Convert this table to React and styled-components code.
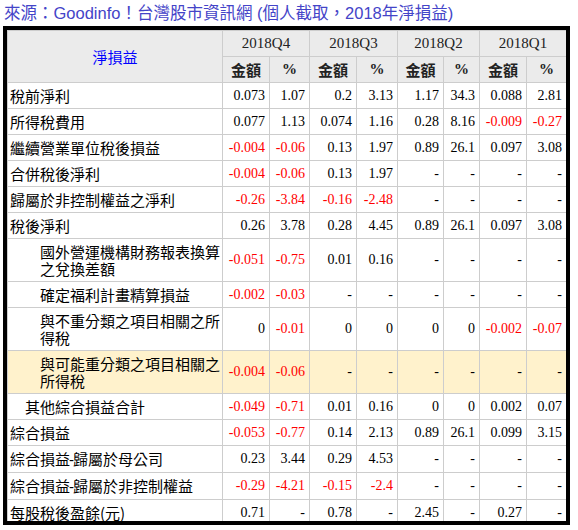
import styled, { createGlobalStyle } from "styled-components";

const GlobalStyle = createGlobalStyle`
	body {
		margin: 0;
		background: #fff;
	}
`;

const Title = styled.div`
	height: 26px;
	padding-left: 4px;
	line-height: 26px;
	font-family: "Liberation Sans", "Noto Sans CJK TC", sans-serif;
	font-size: 16.5px;
	color: #4444c8;
	white-space: nowrap;
`;

const Frame = styled.div`
	margin-left: 3px;
	width: 559px;
	height: 491px;
	border: 4px solid #000;
	overflow: hidden;
`;

const Grid = styled.div`
	display: grid;
	grid-template-columns: 214px 46px 39px 46px 40px 45px 35px 46px 39px;
	gap: 1px;
	padding: 1px 0 0 1px;
	background: #cdcdcd;
`;

const HeadCell = styled.div`
	display: flex;
	align-items: center;
	justify-content: center;
	height: ${(p) => (p.$tall ? "51px" : "25px")};
	grid-row: ${(p) => (p.$tall ? "span 2" : "auto")};
	grid-column: ${(p) => (p.$wide ? "span 2" : "auto")};
	background: #ebebeb;
	font-family: ${(p) =>
		p.$bold
			? '"Liberation Serif", "Noto Sans CJK TC", serif'
			: p.$blue
			? '"Noto Sans CJK TC", sans-serif'
			: '"Liberation Serif", serif'};
	font-size: 15px;
	font-weight: ${(p) => (p.$bold ? 700 : 400)};
	color: ${(p) => (p.$blue ? "#0000ff" : "#222")};
`;

const LabelCell = styled.div`
	display: flex;
	align-items: center;
	min-height: 25px;
	box-sizing: border-box;
	padding: 4px 2px 4px ${(p) => 2 + p.$indent * 15}px;
	background: ${(p) => (p.$hl ? "#fff2cc" : "#fff")};
	font-family: "Noto Sans CJK TC", sans-serif;
	font-size: 15px;
	line-height: 17px;
	color: #000;
`;

const Dash = styled.span`
	font-family: "Liberation Sans", sans-serif;
	margin: 0 -1px;
`;

const NumCell = styled.div`
	display: flex;
	align-items: center;
	justify-content: flex-end;
	padding-right: 4px;
	background: ${(p) => (p.$hl ? "#fff2cc" : "#fff")};
	font-family: "Liberation Serif", serif;
	font-size: 14px;
	color: ${(p) => (p.$neg ? "#ff0000" : "#000")};
	white-space: nowrap;
`;

const quarters = ["2018Q4", "2018Q3", "2018Q2", "2018Q1"];

const rows = [
	["稅前淨利", 0, ["0.073", "1.07", "0.2", "3.13", "1.17", "34.3", "0.088", "2.81"]],
	["所得稅費用", 0, ["0.077", "1.13", "0.074", "1.16", "0.28", "8.16", "-0.009", "-0.27"]],
	["繼續營業單位稅後損益", 0, ["-0.004", "-0.06", "0.13", "1.97", "0.89", "26.1", "0.097", "3.08"]],
	["合併稅後淨利", 0, ["-0.004", "-0.06", "0.13", "1.97", "-", "-", "-", "-"]],
	["歸屬於非控制權益之淨利", 0, ["-0.26", "-3.84", "-0.16", "-2.48", "-", "-", "-", "-"]],
	["稅後淨利", 0, ["0.26", "3.78", "0.28", "4.45", "0.89", "26.1", "0.097", "3.08"]],
	["國外營運機構財務報表換算之兌換差額", 2, ["-0.051", "-0.75", "0.01", "0.16", "-", "-", "-", "-"]],
	["確定福利計畫精算損益", 2, ["-0.002", "-0.03", "-", "-", "-", "-", "-", "-"]],
	["與不重分類之項目相關之所得稅", 2, ["0", "-0.01", "0", "0", "0", "0", "-0.002", "-0.07"]],
	["與可能重分類之項目相關之所得稅", 2, ["-0.004", "-0.06", "-", "-", "-", "-", "-", "-"], true],
	["其他綜合損益合計", 1, ["-0.049", "-0.71", "0.01", "0.16", "0", "0", "0.002", "0.07"]],
	["綜合損益", 0, ["-0.053", "-0.77", "0.14", "2.13", "0.89", "26.1", "0.099", "3.15"]],
	["綜合損益-歸屬於母公司", 0, ["0.23", "3.44", "0.29", "4.53", "-", "-", "-", "-"]],
	["綜合損益-歸屬於非控制權益", 0, ["-0.29", "-4.21", "-0.15", "-2.4", "-", "-", "-", "-"]],
	["每股稅後盈餘(元)", 0, ["0.71", "-", "0.78", "-", "2.45", "-", "0.27", "-"]],
];

function renderLabel(label) {
	const parts = label.split("-");
	if (parts.length === 1) return label;
	return (
		<span>
			{parts[0]}
			<Dash>-</Dash>
			{parts[1]}
		</span>
	);
}

function App() {
	return (
		<>
			<GlobalStyle />
			<Title>來源：Goodinfo！台灣股市資訊網 (個人截取，2018年淨損益)</Title>
			<Frame>
				<Grid>
					<HeadCell $tall $blue>
						淨損益
					</HeadCell>
					{quarters.map((q) => (
						<HeadCell key={q} $wide>
							{q}
						</HeadCell>
					))}
					{quarters.map((q) => [
						<HeadCell key={q + "a"} $bold>
							金額
						</HeadCell>,
						<HeadCell key={q + "p"} $bold>
							%
						</HeadCell>,
					])}
					{rows.map(([label, indent, values, hl]) => [
						<LabelCell key={label} $indent={indent} $hl={hl}>
							{renderLabel(label)}
						</LabelCell>,
						values.map((v, i) => (
							<NumCell
								key={label + i}
								$hl={hl}
								$neg={v.startsWith("-") && v.length > 1}
							>
								{v}
							</NumCell>
						)),
					])}
				</Grid>
			</Frame>
		</>
	);
}

export default App;
